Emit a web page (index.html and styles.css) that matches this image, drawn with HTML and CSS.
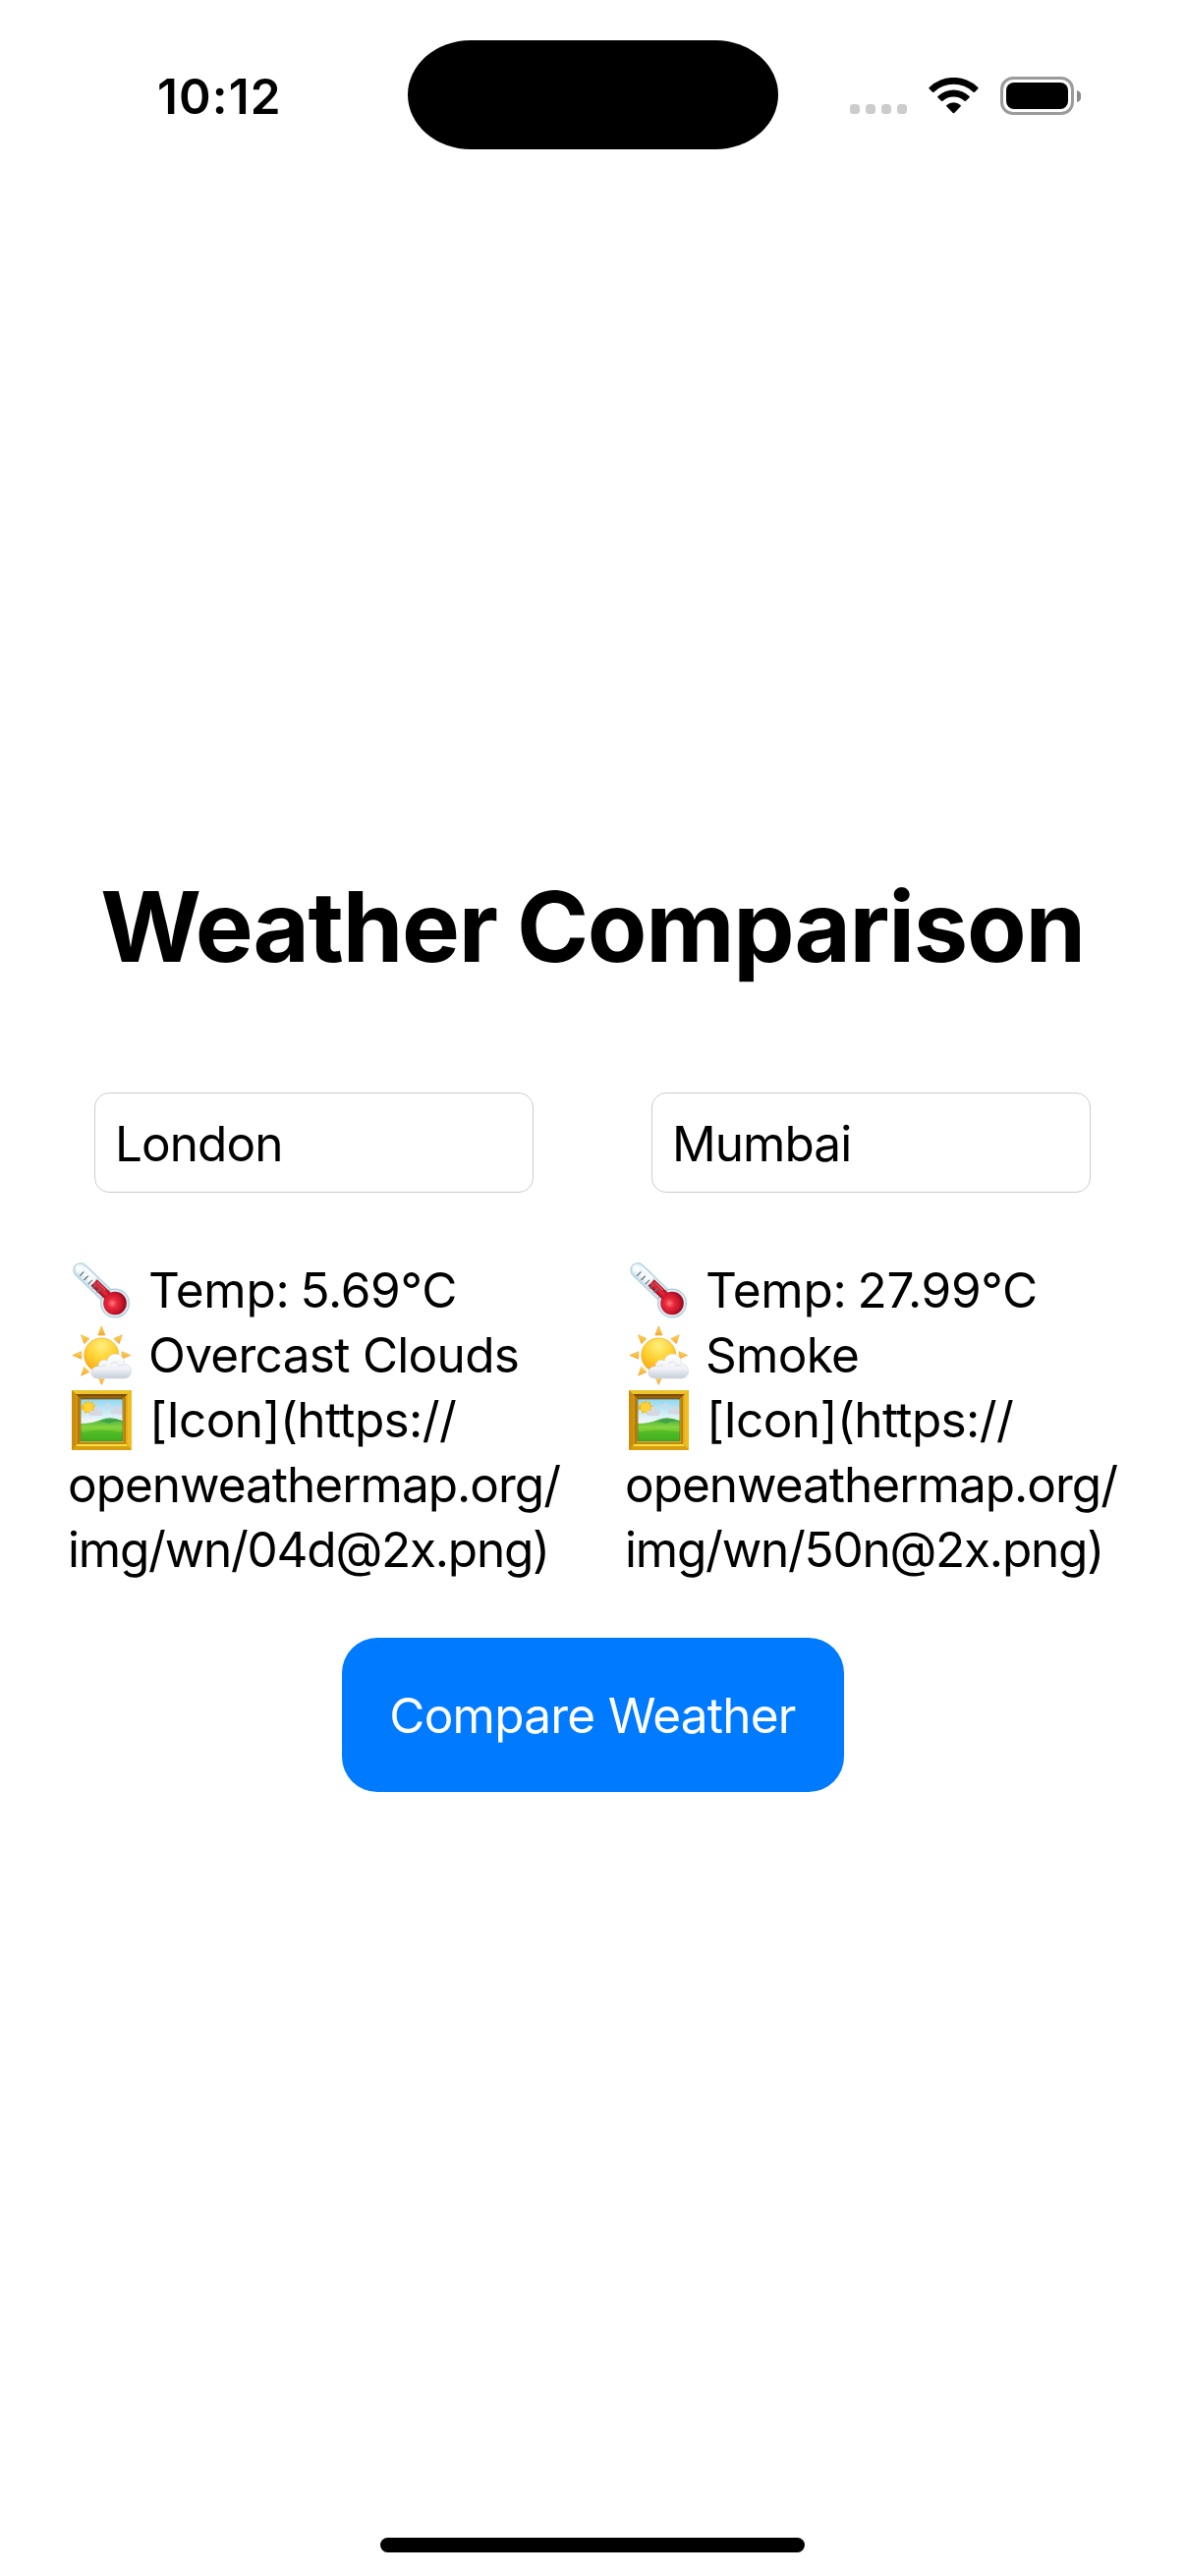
FILE: index.html
```html
<!DOCTYPE html>
<html lang="en">
<head>
<meta charset="utf-8">
<title>Weather Comparison</title>
<link rel="stylesheet" href="styles.css">
</head>
<body>
<svg class="defs" aria-hidden="true">
  <defs>
    <linearGradient id="glass" x1="0" y1="0" x2="0" y2="1"><stop offset="0" stop-color="#cfe6f0"/><stop offset=".5" stop-color="#fdfeff"/><stop offset="1" stop-color="#c6dde8"/></linearGradient>
    <linearGradient id="tube" x1="0" y1="0" x2="0" y2="1"><stop offset="0" stop-color="#a90d22"/><stop offset=".5" stop-color="#e52b3c"/><stop offset="1" stop-color="#9d0b20"/></linearGradient>
    <radialGradient id="bulb" cx=".42" cy=".58" r=".58"><stop offset="0" stop-color="#ff7a80"/><stop offset=".35" stop-color="#e8293b"/><stop offset=".75" stop-color="#c8142b"/><stop offset="1" stop-color="#8f0a1d"/></radialGradient>
    <radialGradient id="sun" cx=".5" cy=".22" r=".85"><stop offset="0" stop-color="#ffee7d"/><stop offset=".5" stop-color="#ffd02f"/><stop offset="1" stop-color="#f79a12"/></radialGradient>
    <linearGradient id="ray" x1="0" y1="0" x2="0" y2="1"><stop offset="0" stop-color="#ffd94a"/><stop offset="1" stop-color="#f6a72d"/></linearGradient>
    <linearGradient id="cloud" x1="0" y1="0" x2="0" y2="1"><stop offset="0" stop-color="#ffffff"/><stop offset=".6" stop-color="#f0f2f6"/><stop offset="1" stop-color="#c6ced9"/></linearGradient>
    <linearGradient id="sky" x1="0" y1="0" x2="0" y2="1"><stop offset="0" stop-color="#8fd8f2"/><stop offset=".5" stop-color="#eef5f8"/></linearGradient>
    <linearGradient id="grass" x1="0" y1="0" x2="0" y2="1"><stop offset="0" stop-color="#3fa845"/><stop offset=".4" stop-color="#86d63c"/><stop offset="1" stop-color="#36a51b"/></linearGradient>
    <symbol id="thermometer" viewBox="0 0 61 61">
      <g transform="translate(44 43.5) rotate(44)">
        <path d="M-12-8.5H-47a7.2 7.2 0 0 0 0 14.4h35z" fill="url(#glass)" stroke="#b3d5e3" stroke-width="1.3" transform="translate(-1.5 1.3)"/>
        <circle r="14.4" fill="#dcebf2" stroke="#adcbd8" stroke-width="1.2"/>
        <path d="M-9-4.8H-30V4.2H-9z" fill="url(#tube)"/>
        <circle r="11.8" fill="url(#bulb)"/>
        <path d="M-49-3.2q-4 3-1 6M-47-4.5h14" fill="none" stroke="#fff" stroke-width="2" stroke-linecap="round"/>
        <path d="M-45-1v6M-39-1v6M-33-1v6M-27-1v6M-21-1v6" stroke="#66737a" stroke-width="1.3"/>
        <path d="M-28-3h12" stroke="#f3747c" stroke-width="1.2" opacity=".7"/>
      </g>
    </symbol>
    <symbol id="sun-cloud" viewBox="0 0 61 61">
      <g fill="url(#ray)" stroke="#eea63a" stroke-width=".6" stroke-linejoin="round">
        <path d="M30.3.8 34 10H26.7z"/><path d="M51.3 9.8 48.3 18.8 42.8 13.6z"/><path d="M9.5 9.8 18 13.6 12.7 18.8z"/>
        <path d="M.8 30.5 9.8 26.7V34.3z"/><path d="M59.8 30.5 51 26.7V34.3z"/><path d="M9.5 51.2 12.7 42.4 18 47.5z"/><path d="M30.3 60.5 26.7 52H34z"/>
      </g>
      <circle cx="30.3" cy="30.5" r="17.5" fill="url(#sun)" stroke="#f5a51e" stroke-width=".7"/>
      <path d="M27 54C16.500 54 18 41.500 27.500 41.800 26.500 36 33 33.800 36 36 39 25 54.500 28 53.500 39.500 63 39.500 63 54 53.500 54z" fill="url(#cloud)" stroke="#d4dae3" stroke-width=".7"/>
      <path d="M29 43q2-4 6-2M40 39q5-4 8 1M47 42q3-3 6-1" fill="none" stroke="#d9dee6" stroke-width="1"/>
    </symbol>
    <symbol id="picture" viewBox="0 0 61 61">
      <path d="M0 0H61V61H0z" fill="#c88a09"/>
      <path d="M0 0H61L56 4H4z" fill="#edc32c"/><path d="M0 0 4 4V57L0 61z" fill="#c98d0d"/><path d="M61 0V61L56 57V4z" fill="#f0bd21"/><path d="M0 61 5 55H56L61 61z" fill="#d6a011"/>
      <path d="M4 4H57L52 9H9z" fill="#7b4b08"/><path d="M4 4 9 9V52L4 57z" fill="#d3940e"/><path d="M57 4V57L52 52V9z" fill="#e8ac18"/><path d="M4 57 9 52H52L57 57z" fill="#ffdf3d"/>
      <path d="M7 7H54V54H7z" fill="none" stroke="#a66d08" stroke-width="1.4"/>
      <path d="M9 9H52V52H9z" fill="url(#sky)"/>
      <path d="m17 10 1.500 3 3.500-1.500-.5 3.500 3.500 1-3 2 1.500 3-3.500.5-1 3-2.500-2-3 1.500-.5-3.500-3-.5V15l3-.5-.5-3 3 1z" fill="#f8bd1a"/>
      <circle cx="17" cy="17.500" r="4.500" fill="#ffd438"/>
      <path d="M18 25c-1-4 3-5 4-4 1-7 7-5 7-1 4 0 3 6 0 6H20zM33 17q0-2 2-2 2-3 4 0 2 0 2 2zM39 23c0-3 3-4 4-3 1-6 7-5 7 0 3 1 2 5-1 5-4-2-7 0-10-2z" fill="#d3d8e2"/>
      <path d="M9 34Q21 34 30 30T52 31V52H9z" fill="url(#grass)"/>
      <path d="M29 32q9-5 23 0-9-1-13 2z" fill="#2f9247" opacity=".6"/>
      <path d="M9 43q20-5 43 0v9H9z" fill="#43b51f" opacity=".6"/>
      <path d="M9 52V9H52V52z" fill="none" stroke="#6d7040" stroke-width=".8"/>
    </symbol>
  </defs>
</svg>
<div class="screen">
  <header class="status">
    <span class="time">10:12</span>
    <span class="island"></span>
    <span class="indicators">
      <span class="dots"><i></i><i></i><i></i><i></i></span>
      <svg class="wifi" viewBox="0 0 52 38"><path d="M.6 11.200Q0 10.500.6 9.900A36 36 0 0 1 50.400 9.900Q51 10.500 50.400 11.200L47 14.700Q46.300 15.400 45.600 14.700A29.200 29.200 0 0 0 5.400 14.700Q4.700 15.400 4 14.700zM9.400 20.200Q8.800 19.500 9.400 18.900A23.400 23.400 0 0 1 41.600 18.900Q42.200 19.500 41.600 20.200L38 23.800Q37.300 24.400 36.600 23.800A16.200 16.200 0 0 0 14.400 23.800Q13.700 24.400 13 23.800zM18.300 29.200Q17.700 28.500 18.400 27.900A10.800 10.800 0 0 1 32.600 27.900Q33.300 28.500 32.700 29.200L26.200 35.900Q25.500 36.500 24.800 35.900z"/></svg>
      <span class="battery"><span class="case"><span class="charge"></span></span><svg class="nub" viewBox="0 0 4 12"><path d="M0 0A6 6.200 0 0 1 0 12z"/></svg></span>
    </span>
  </header>
  <main class="content">
    <h1 class="title">Weather Comparison</h1>
    <div class="cities">
      <section class="city">
        <input class="field" type="text" value="London" aria-label="First city">
        <div class="report">
          <p class="line temp"><svg class="emoji"><use href="#thermometer"/></svg><span>Temp: 5.69°C</span></p>
          <p class="line sky"><svg class="emoji"><use href="#sun-cloud"/></svg><span>Overcast Clouds</span></p>
          <p class="line link"><svg class="emoji"><use href="#picture"/></svg><span>[Icon](https://</span></p>
          <p class="line host">openweathermap.org/</p>
          <p class="line file">img/wn/04d@2x.png)</p>
        </div>
      </section>
      <section class="city">
        <input class="field" type="text" value="Mumbai" aria-label="Second city">
        <div class="report">
          <p class="line temp"><svg class="emoji"><use href="#thermometer"/></svg><span>Temp: 27.99°C</span></p>
          <p class="line sky"><svg class="emoji"><use href="#sun-cloud"/></svg><span>Smoke</span></p>
          <p class="line link"><svg class="emoji"><use href="#picture"/></svg><span>[Icon](https://</span></p>
          <p class="line host">openweathermap.org/</p>
          <p class="line file">img/wn/50n@2x.png)</p>
        </div>
      </section>
    </div>
    <button class="compare" type="button">Compare Weather</button>
  </main>
  <footer class="home"><span class="home-bar"></span></footer>
</div>
</body>
</html>
```
FILE: styles.css
```css
* { box-sizing: border-box; }
body { margin: 0; background: #fff; color: #000; font: 400 49.5px/66px Inter, sans-serif; }
.defs { position: absolute; width: 0; height: 0; }
.screen { display: flex; flex-direction: column; width: 1206px; height: 2622px; }

.status { display: grid; grid-template-columns: 1fr 377px 1fr; height: 186px; padding-top: 41px; }
.time { padding: 24px 0 0 160px; font-weight: 600; letter-spacing: 1.1px; }
.island { height: 111px; border-radius: 64px / 55.5px; background: #000; }
.indicators { display: flex; align-items: flex-start; padding: 37px 0 0 73.5px; }
.dots { display: flex; gap: 6px; margin-top: 28px; }
.dots i { width: 10px; height: 10px; border-radius: 3.5px; background: #ccc; }
.wifi { width: 52px; height: 38px; margin: 1px 0 0 22px; }
.battery { display: flex; align-items: center; gap: 3px; margin-left: 21px; }
.case { width: 75px; height: 39px; padding: 3px; border: 3px solid #9b9b9b; border-radius: 13px; }
.charge { display: block; height: 27px; border-radius: 8px; background: #000; }
.nub { width: 4px; height: 12px; fill: #8a8a8a; }

.content { flex: 1; display: flex; flex-direction: column; align-items: center; justify-content: center; }
.title { margin: 0 0 108px; font-size: 99px; font-weight: 700; line-height: 122px; letter-spacing: -1.3px; word-spacing: -2px; white-space: nowrap; }
.cities { display: grid; grid-template-columns: 507px 507px; gap: 60px; }
.city { display: flex; flex-direction: column; gap: 66px; }
.field { width: 447px; height: 102px; margin: 0 30px; padding: 2px 20px 0; border: 1px solid #ccc; border-radius: 15px; background: #fff; color: #000; font: inherit; letter-spacing: -.95px; }
.report { padding-left: 3px; }
.line { display: flex; align-items: center; gap: 17px; height: 66px; margin: 0; white-space: pre; }
.emoji { flex: none; width: 61px; height: 61px; margin-left: 4px; }
.temp { letter-spacing: -.3px; word-spacing: -2.5px; }
.sky { letter-spacing: -.7px; }
.link { gap: 18px; letter-spacing: -.62px; }
.host { letter-spacing: -1px; }
.file { letter-spacing: -1.22px; }
.compare { width: 511px; height: 157px; margin-top: 57px; padding: 0; border: 0; border-radius: 36px; background: #007aff; color: #fff; font: inherit; letter-spacing: -.75px; }

.home { display: flex; align-items: flex-end; justify-content: center; height: 102px; padding-bottom: 24px; }
.home-bar { width: 432px; height: 15px; border-radius: 8px; background: #000; }
```
